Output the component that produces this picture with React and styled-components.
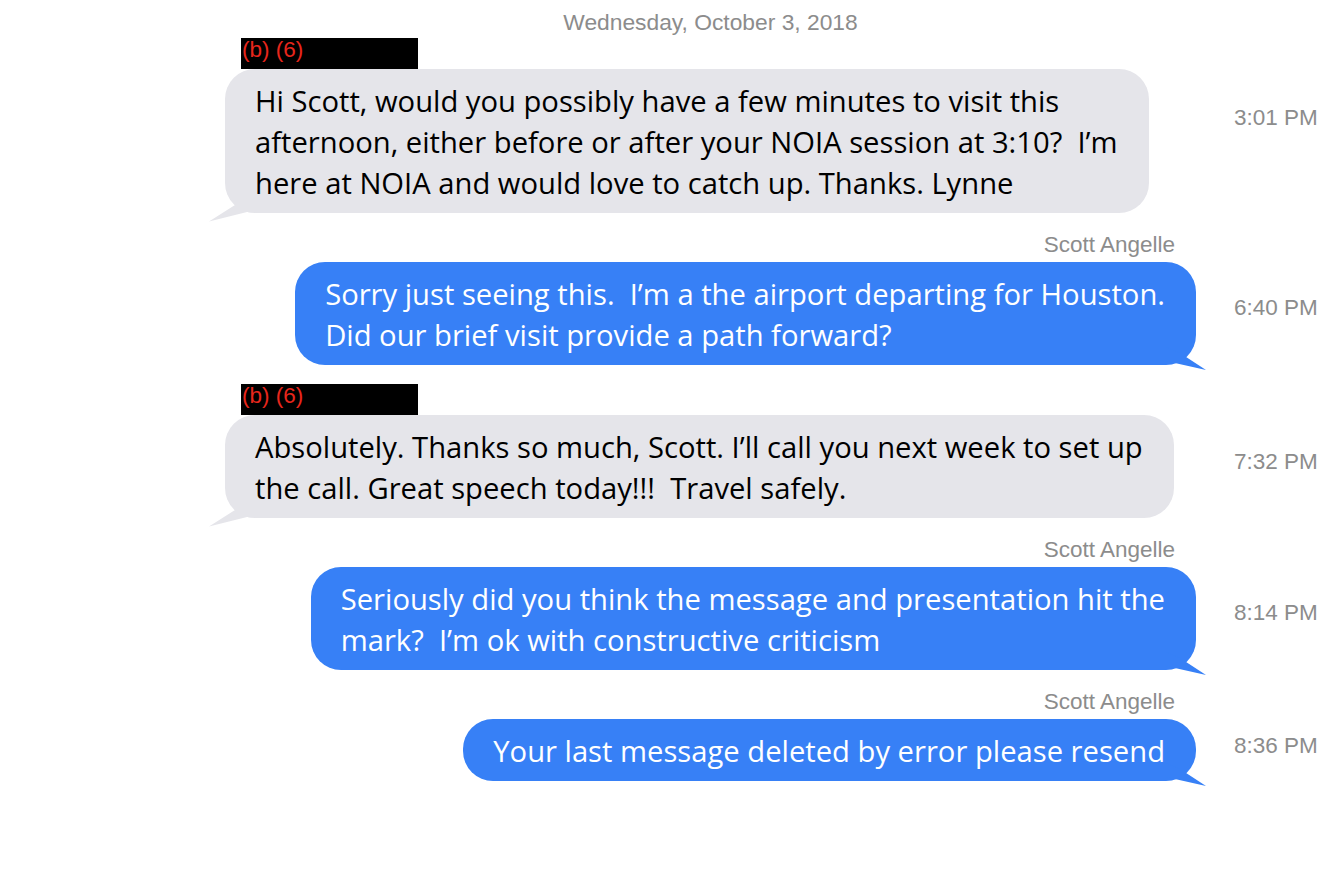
import React from 'react'
import styled, { createGlobalStyle } from 'styled-components'

const GlobalStyle = createGlobalStyle`
    html, body {
        margin: 0;
        padding: 0;
        background: #ffffff;
    }
    body {
        font-family: "Liberation Sans", Arial, sans-serif;
    }
`

const messages = [
    {
        from: 'them',
        label: '(b) (6)',
        time: '3:01 PM',
        timeOffset: 36,
        lines: [
            'Hi Scott, would you possibly have a few minutes to visit this',
            'afternoon, either before or after your NOIA session at 3:10?  I\u2019m',
            'here at NOIA and would love to catch up. Thanks. Lynne'
        ]
    },
    {
        from: 'me',
        label: 'Scott Angelle',
        time: '6:40 PM',
        timeOffset: 33,
        lines: [
            'Sorry just seeing this.  I\u2019m a the airport departing for Houston.',
            'Did our brief visit provide a path forward?'
        ]
    },
    {
        from: 'them',
        label: '(b) (6)',
        time: '7:32 PM',
        timeOffset: 34,
        lines: [
            'Absolutely. Thanks so much, Scott. I\u2019ll call you next week to set up',
            'the call. Great speech today!!!  Travel safely.'
        ]
    },
    {
        from: 'me',
        label: 'Scott Angelle',
        time: '8:14 PM',
        timeOffset: 33,
        lines: [
            'Seriously did you think the message and presentation hit the',
            'mark?  I\u2019m ok with constructive criticism'
        ]
    },
    {
        from: 'me',
        label: 'Scott Angelle',
        time: '8:36 PM',
        timeOffset: 14,
        lines: ['Your last message deleted by error please resend']
    }
]

// little wedge under the bubble corner
const Tail = ({ mine }) =>
    mine ? (
        <BlueTail viewBox="0 0 40 30" width="40" height="30">
            <polygon points="0,4 14,10 40,27 0,18" fill="#3780f6" />
        </BlueTail>
    ) : (
        <GrayTail viewBox="0 0 50 30" width="50" height="30">
            <polygon points="1,28.5 27,12 40,4 50,4 50,20 39,19" fill="#e5e5ea" />
        </GrayTail>
    )

export default function App() {
    return (
        <Page>
            <GlobalStyle />
            <Thread>
                <DateHeader>Wednesday, October 3, 2018</DateHeader>
                {messages.map((m, i) => {
                    const mine = m.from === 'me'
                    return (
                        <Message key={i}>
                            {mine ? (
                                <SenderName>{m.label}</SenderName>
                            ) : (
                                <Redacted>{m.label}</Redacted>
                            )}
                            <Bubble $mine={mine}>
                                {m.lines.join('\n')}
                                <Tail mine={mine} />
                            </Bubble>
                            <Time $offset={m.timeOffset}>{m.time}</Time>
                        </Message>
                    )
                })}
            </Thread>
        </Page>
    )
}

const Page = styled.div`
    width: 100%;
    min-height: 892px;
    background: #ffffff;
    padding-top: 10px;
    box-sizing: border-box;
`
const Thread = styled.div`
    margin-left: 225px;
    width: 1100px;
    display: flex;
    flex-direction: column;
    gap: 19px;
`
const DateHeader = styled.div`
    width: 971px;
    text-align: center;
    color: #8c8c8c;
    font-size: 22.8px;
    line-height: 24px;
    margin-bottom: -15px;
`
// one message: name on top, bubble below, time to the right
const Message = styled.div`
    display: grid;
    grid-template-columns: 971px 90px;
    column-gap: 38px;
    align-items: start;
`
const Redacted = styled.div`
    grid-column: 1;
    justify-self: start;
    margin-left: 16px;
    width: 177px;
    height: 31px;
    background: #000000;
    color: #e8261c;
    font-size: 22.5px;
    line-height: 24px;
    padding-left: 1px;
    box-sizing: border-box;
`
const SenderName = styled.div`
    grid-column: 1;
    justify-self: end;
    margin-right: 21px;
    margin-bottom: 4px;
    color: #8c8c8c;
    font-size: 22.5px;
    line-height: 26px;
`
const Bubble = styled.div`
    grid-column: 1;
    grid-row: 2;
    justify-self: ${p => (p.$mine ? 'end' : 'start')};
    position: relative;
    padding: 12px 31px 9px 30px;
    border-radius: 30px;
    background: ${p => (p.$mine ? '#3780f6' : '#e5e5ea')};
    color: ${p => (p.$mine ? '#ffffff' : '#000000')};
    font-family: "Open Sans", "Noto Sans", sans-serif;
    font-size: 29.2px;
    line-height: 41px;
    white-space: pre;
`
const GrayTail = styled.svg`
    position: absolute;
    left: -17px;
    bottom: -10px;
    display: block;
`
const BlueTail = styled.svg`
    position: absolute;
    right: -10px;
    bottom: -8px;
    display: block;
`
const Time = styled.div`
    grid-column: 2;
    grid-row: 2;
    margin-top: ${p => p.$offset}px;
    color: #8c8c8c;
    font-size: 22.5px;
    line-height: 26px;
    white-space: nowrap;
`
